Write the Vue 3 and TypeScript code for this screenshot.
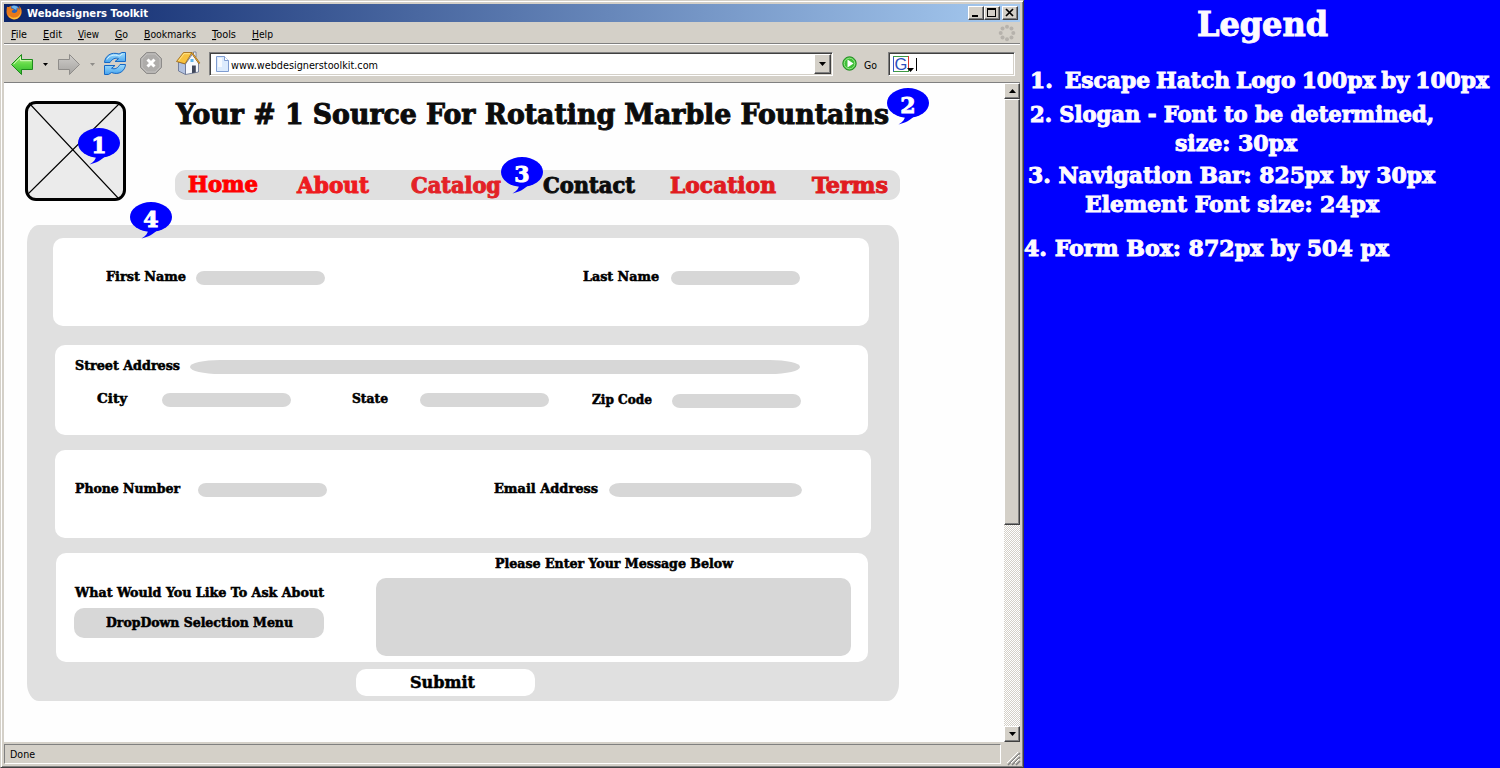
<script setup lang="ts">
import { h, type FunctionalComponent } from 'vue'

interface RunProps {
  t: string
  w: number
  size: number
  u?: boolean
}

// Single line of text fitted to a fixed width; the box spans cap height to baseline.
const TextRun: FunctionalComponent<RunProps> = (p) => {
  const cap = Math.round(p.size * 0.729)
  const content = p.u
    ? [h('tspan', { 'text-decoration': 'underline' }, p.t[0]), p.t.slice(1)]
    : p.t
  return h('svg', { class: 'run', width: p.w, height: cap }, [
    h(
      'text',
      {
        x: 0,
        y: cap,
        'font-size': p.size,
        textLength: p.w,
        lengthAdjust: 'spacingAndGlyphs',
        fill: 'currentColor',
        'xml:space': 'preserve',
      },
      content,
    ),
  ])
}
TextRun.props = { t: String, w: Number, size: Number, u: Boolean } as any

const menu = [
  { t: 'File', w: 16 },
  { t: 'Edit', w: 19 },
  { t: 'View', w: 21 },
  { t: 'Go', w: 13 },
  { t: 'Bookmarks', w: 52 },
  { t: 'Tools', w: 24 },
  { t: 'Help', w: 21 },
]

const nav = [
  { t: 'Home', w: 70, c: 'home' },
  { t: 'About', w: 72, c: 'about' },
  { t: 'Catalog', w: 90, c: 'catalog' },
  { t: 'Contact', w: 92, c: 'contact' },
  { t: 'Location', w: 106, c: 'location' },
  { t: 'Terms', w: 76, c: 'terms' },
]

const callouts = [1, 2, 3, 4]

const legend = [
  { t: '1.\u00a0 Escape Hatch Logo 100px by 100px', w: 459, c: 'l1' },
  { t: '2. Slogan - Font to be determined,', w: 404, c: 'l2' },
  { t: 'size: 30px', w: 122, c: 'l3' },
  { t: '3. Navigation Bar: 825px by 30px', w: 407, c: 'l4' },
  { t: 'Element Font size: 24px', w: 294, c: 'l5' },
  { t: '4. Form Box: 872px by 504 px', w: 365, c: 'l6' },
]

const dots = Array.from({ length: 8 }, (_, i) => ({
  x: 8 + 6.3 * Math.cos((i * Math.PI) / 4),
  y: 8 + 6.3 * Math.sin((i * Math.PI) / 4),
}))
</script>

<template>
  <div class="screen">
    <div class="window">
      <div class="titlebar">
        <svg class="fox" width="16" height="16" viewBox="0 0 16 16">
          <circle cx="8.3" cy="7.6" r="6.4" fill="#2b62b8" />
          <path d="M5 3C7 1 11 1.500 12.500 4C11 3.500 10 4.500 10.500 6C8 5 7 4 5 3Z" fill="#6fb5ea" />
          <path d="M1 2.500C1.500 3 2 3.200 2.800 3C3.500 2.300 4.600 2 5.500 2.300C4.800 3 4.800 3.800 5.300 4.500L7.800 5C7.500 6 6.500 6.400 5.800 6.800C5.600 8.500 7.400 9.600 9.400 8.800C11.500 8 12 5.500 11 3.500C12.500 4 13 5 13.300 6C13.800 4.800 13.600 3 12.600 1.800C15 3.200 16 6 15.700 8.600C15.200 12.800 12 15.500 8.300 15.500C3.800 15.500 .5 12 .5 7.800C.5 5.800 .8 4 1 2.500Z" fill="#e8791a" />
          <path d="M13.800 4C15.600 8 14 12.500 9.500 13.500C6 14.200 3 12.500 2 10C3 14 6 15.200 8.500 15.200C13.500 15 16.500 9.500 13.800 4Z" fill="#fcc23c" />
        </svg>
        <TextRun class="ui bold" t="Webdesigners Toolkit" :w="121" :size="11" />
        <div class="winbtns">
          <div class="btn"><svg width="12" height="10"><path d="M2 7h6v2H2z" /></svg></div>
          <div class="btn"><svg width="12" height="10"><path d="M1 0h9v9H1zM2 2v6h7V2z" fill-rule="evenodd" /></svg></div>
          <div class="btn close"><svg width="12" height="10"><path d="M2 1L9 8M9 1L2 8" stroke="#000" stroke-width="1.700" /></svg></div>
        </div>
      </div>

      <div class="menubar">
        <TextRun v-for="m in menu" :key="m.t" class="ui item" :t="m.t" :w="m.w" :size="11" u />
        <svg class="throbber" width="16" height="16">
          <circle v-for="(d, i) in dots" :key="i" :cx="d.x" :cy="d.y" r="2" fill="#b6b2ac" />
        </svg>
      </div>

      <div class="toolbar">
        <svg class="tools" width="205" height="37" viewBox="0 0 205 37">
          <defs>
            <linearGradient id="gr" x1="0" y1="0" x2="0" y2="1"><stop offset="0" stop-color="#b6f28c" /><stop offset=".5" stop-color="#5fd845" /><stop offset="1" stop-color="#2eb62c" /></linearGradient>
            <linearGradient id="gy" x1="0" y1="0" x2="0" y2="1"><stop offset="0" stop-color="#cfcdca" /><stop offset="1" stop-color="#a5a3a0" /></linearGradient>
            <linearGradient id="bl" x1="0" y1="0" x2="0" y2="1"><stop offset="0" stop-color="#a2ddfb" /><stop offset="1" stop-color="#44a2ee" /></linearGradient>
          </defs>
          <path d="M7.500 19.500L17.500 9.500V14.500H28.500V24.500H17.500V29.500Z" fill="url(#gr)" stroke="#1d8a1c" stroke-linejoin="round" />
          <path d="M9.500 19.300L16.500 12.200V15.700H27.500" fill="none" stroke="#d8fbbf" />
          <path d="M39 18h5l-2.500 3z" fill="#000" />
          <path d="M75.500 19.500L65.500 9.500V14.500H54.500V24.500H65.500V29.500Z" fill="url(#gy)" stroke="#8f8d8a" stroke-linejoin="round" />
          <path d="M86 18h5l-2.500 3z" fill="#8e8c88" />
          <path d="M100.500 17.500C101 11 107 6.500 115 9L118 7.500H121.500V16.500H111L114.500 13.700C111.500 12.300 108 14 106 17.500Z" fill="url(#bl)" stroke="#1668c4" stroke-linejoin="round" />
          <path d="M121.500 19.500C121 26 115 30.500 107.500 27.500L104.500 29.500H100.500V20.500H111L107.500 23.300C111 24.700 114 23 116 19.500Z" fill="url(#bl)" stroke="#1668c4" stroke-linejoin="round" />
          <path d="M103 14.500C105 10.500 110 9 115.300 11L118.500 9" fill="none" stroke="#d5f2ff" />
          <path d="M142.500 7.500H151.500L157.500 13.500V22.500L151.500 28.500H142.500L136.500 22.500V13.500Z" fill="#aeacaa" stroke="#8e8c8a" />
          <path d="M143 9H151L156 14V22L151 27H143L138 22V14Z" fill="none" stroke="#c2c0be" />
          <path d="M143.500 14.500L150.500 21.500M150.500 14.500L143.500 21.500" stroke="#fff" stroke-width="3" />
          <path d="M174.500 17L181.500 19V29.500L174.500 26Z" fill="#b3c2e0" stroke="#5f6c8e" stroke-width=".8" />
          <path d="M181.500 19L188.500 9L194.500 18V27L181.500 29.500Z" fill="#f6f8fc" stroke="#5f6c8e" stroke-width=".8" />
          <path d="M188 20.500h3.800v7l-3.800.8z" fill="#40475b" />
          <path d="M186.500 14h3v3h-3z" fill="#5bb5ec" />
          <path d="M189.500 9V7h2.500v5" fill="#f2f2f5" stroke="#69758c" stroke-width=".8" />
          <path d="M172.500 16.500L179.500 7.500H188L181 18.800Z" fill="#f7c23f" stroke="#9a6412" stroke-width=".8" stroke-linejoin="round" />
          <path d="M174.500 16L180 8.700H186" fill="none" stroke="#ffe48a" />
          <path d="M188 8L195.500 18.500" fill="none" stroke="#9a6412" stroke-width="1.800" />
          <path d="M188 8L195.500 18.500" fill="none" stroke="#e3a93a" stroke-width=".9" />
        </svg>
        <div class="field url">
          <svg width="13" height="16"><path d="M.5 .5H8.500L12.500 4.500V15.500H.5Z" fill="#dcebfd" stroke="#7f9cd0" /><path d="M8.500 .5V4.500H12.500" fill="#fff" stroke="#7f9cd0" /><path d="M2 2h4v9H2z" fill="#f6faff" /></svg>
          <TextRun class="ui" t="www.webdesignerstoolkit.com" :w="147" :size="11" />
          <div class="btn drop"><svg width="7" height="4"><path d="M0 0H7L3.500 4Z" /></svg></div>
        </div>
        <svg class="go" width="15" height="15"><circle cx="7.500" cy="7.500" r="6.700" fill="#3fbf38" stroke="#228c22" /><circle cx="7.500" cy="7.500" r="5.300" fill="none" stroke="#9be78b" /><path d="M5.500 3.500L11.500 7.500L5.500 11.500Z" fill="#fff" /></svg>
        <TextRun class="ui golabel" t="Go" :w="13" :size="11" />
        <div class="field search">
          <svg width="26" height="18">
            <rect x=".5" y=".5" width="15" height="15" fill="#fff" stroke="#3f9a45" />
            <path d="M.5 1V15.500" stroke="#3657c4" />
            <path d="M15.500 0V12" stroke="#d83a30" />
            <text x="1.500" y="13.800" font-size="16.500" fill="#2a50bd" class="gee">G</text>
            <path d="M14 12H21L17.500 16Z" />
            <path d="M23.500 2V15" stroke="#000" />
          </svg>
        </div>
      </div>

      <div class="viewport">
        <div class="page">
          <div class="header">
            <svg class="logo" width="101" height="100">
              <rect x="1.500" y="1.500" width="98" height="97" rx="9.500" fill="#ebebeb" />
              <path d="M4 2L94 98M95 2L2 94" stroke="#000" stroke-width="1.100" />
              <rect x="1.500" y="1.500" width="98" height="97" rx="9.500" fill="none" stroke="#000" stroke-width="3" />
            </svg>
            <div class="headcol">
              <TextRun class="slogan" t="Your # 1 Source For Rotating Marble Fountains" :w="713" :size="27.5" />
              <div class="nav">
                <TextRun v-for="n in nav" :key="n.t" :class="n.c" :t="n.t" :w="n.w" :size="22" />
              </div>
            </div>
          </div>

          <div class="form">
            <div class="card names">
              <TextRun class="first" t="First Name" :w="80" :size="13" />
              <div class="input i10"></div>
              <TextRun class="last" t="Last Name" :w="76" :size="13" />
              <div class="input i12"></div>
            </div>
            <div class="card address">
              <div class="row">
                <TextRun class="street" t="Street Address" :w="105" :size="13" />
                <div class="input long"></div>
              </div>
              <div class="row second">
                <TextRun class="city" t="City" :w="30" :size="13" />
                <div class="input i35"></div>
                <TextRun class="state" t="State" :w="36" :size="13" />
                <div class="input i32"></div>
                <TextRun class="zip" t="Zip Code" :w="60" :size="13" />
                <div class="input i20"></div>
              </div>
            </div>
            <div class="card contactinfo">
              <TextRun class="street" t="Phone Number" :w="105" :size="13" />
              <div class="input i18"></div>
              <TextRun class="email" t="Email Address" :w="104" :size="13" />
              <div class="input mail"></div>
            </div>
            <div class="card message">
              <div class="ask">
                <TextRun class="q" t="What Would You Like To Ask About" :w="249" :size="13" />
                <div class="dropdown"><TextRun t="DropDown Selection Menu" :w="187" :size="13" /></div>
              </div>
              <div class="msg">
                <TextRun class="q" t="Please Enter Your Message Below" :w="238" :size="13" />
                <div class="textarea"></div>
              </div>
            </div>
            <div class="submit"><TextRun t="Submit" :w="65" :size="16.5" /></div>
          </div>

          <svg v-for="n in callouts" :key="n" class="callout" :class="'c' + n" width="42" height="37">
            <path d="M18 28C18 31 16 34 11.500 36.500C18 35 24 32 27 28Z" fill="#00f" />
            <ellipse cx="21" cy="15" rx="21" ry="15" fill="#00f" />
            <text x="21" y="25" font-size="22" text-anchor="middle" fill="#fff">{{ n }}</text>
          </svg>
        </div>
        <div class="scrollbar">
          <div class="btn sb"><svg width="7" height="4"><path d="M3.500 0L7 4H0Z" /></svg></div>
          <div class="btn thumb"></div>
          <div class="btn sb bottom"><svg width="7" height="4"><path d="M0 0H7L3.500 4Z" /></svg></div>
        </div>
      </div>

      <div class="statusbar">
        <div class="status"><TextRun class="ui" t="Done" :w="25" :size="11" /></div>
        <svg class="grip" width="13" height="13">
          <path d="M0 12L12 0M4 12L12 4M8 12L12 8" stroke="#808080" stroke-width="1.500" transform="translate(1 1)" />
          <path d="M0 11L11 0M4 11L12 3M8 11L12 7" stroke="#fff" />
        </svg>
      </div>
    </div>

    <div class="legend">
      <TextRun class="heading" t="Legend" :w="131" :size="33" />
      <TextRun v-for="l in legend" :key="l.c" :class="l.c" :t="l.t" :w="l.w" :size="22.5" />
    </div>
  </div>
</template>

<style>
body {
  margin: 0;
  overflow: hidden;
}
</style>

<style scoped>
.screen {
  display: flex;
  width: 1500px;
  height: 768px;
  overflow: hidden;
  background: #00f;
  font-family: 'DejaVu Serif Condensed', 'DejaVu Serif', serif;
  font-stretch: condensed;
  font-weight: bold;
  color: #000;
}
svg {
  display: block;
  flex: none;
  overflow: visible;
}
.run {
  stroke: currentColor;
  stroke-width: 0.5px;
}
.slogan,
.nav .run,
.legend .run {
  stroke-width: 0.9px;
}
.run.ui {
  stroke: none;
}
.ui {
  font-family: 'DejaVu Sans Condensed', 'DejaVu Sans', sans-serif;
  font-weight: normal;
}
.ui.bold {
  font-weight: bold;
}
.window {
  box-sizing: border-box;
  display: flex;
  flex-direction: column;
  flex: none;
  width: 1024px;
  height: 768px;
  padding: 2px;
  border: 1px solid;
  border-color: #d4d0c8 #404040 #404040 #d4d0c8;
  background: #d4d0c8;
  box-shadow: inset 1px 1px #fff, inset -1px -1px #808080;
}
.titlebar {
  box-sizing: border-box;
  display: flex;
  height: 18px;
  margin: 1px 1px 0;
  padding-left: 2px;
  background: linear-gradient(90deg, #0a246a, #a6caf0);
  color: #fff;
}
.titlebar .fox {
  margin: 0 5px 0 0;
}
.titlebar .bold {
  margin-top: 5px;
}
.winbtns {
  display: flex;
  margin: 2px 2px 0 auto;
}
.btn {
  box-sizing: border-box;
  display: flex;
  justify-content: center;
  align-items: center;
  flex: none;
  width: 16px;
  height: 14px;
  border: 1px solid;
  border-color: #fff #404040 #404040 #fff;
  background: #d4d0c8;
  box-shadow: inset -1px -1px #808080;
}
.close {
  margin-left: 2px;
}
.menubar {
  display: flex;
  height: 21px;
  margin: 0 1px;
  padding-left: 7px;
  border-bottom: 1px solid #808080;
}
.menubar .item {
  margin: 8px 16px 0 0;
}
.throbber {
  margin: 3px 5px 0 auto;
}
.toolbar {
  box-sizing: border-box;
  display: flex;
  height: 39px;
  margin: 0 1px;
  border-top: 1px solid #fff;
  border-bottom: 1px solid #808080;
}
.field {
  box-sizing: border-box;
  display: flex;
  flex: none;
  height: 24px;
  margin-top: 7px;
  border: 1px solid;
  border-color: #808080 #fff #fff #808080;
  background: #fff;
  box-shadow: inset 1px 1px #404040, inset -1px -1px #d4d0c8;
}
.url {
  width: 624px;
  padding: 3px 1px 0 6px;
}
.url .ui {
  margin: 5px 0 0 2px;
}
.drop {
  width: 17px;
  height: 20px;
  margin: -2px 0 0 auto;
}
.go {
  margin: 11px 0 0 9px;
}
.golabel {
  margin: 16px 0 0 7px;
}
.search {
  width: 127px;
  margin-left: 11px;
  padding: 3px 0 0 4px;
}
.gee {
  font-family: 'Liberation Sans', sans-serif;
  font-weight: normal;
}
.viewport {
  display: flex;
  height: 659px;
  margin: 0 1px;
}
.page {
  position: relative;
  width: 1000px;
  background: #fefefe;
}
.header {
  display: flex;
  padding: 18px 0 0 21px;
}
.headcol {
  display: flex;
  flex-direction: column;
  margin-left: 49px;
}
.slogan {
  margin: 3px 0 0 1px;
  color: #0c0c0c;
}
.nav {
  display: flex;
  width: 725px;
  height: 30px;
  margin: 46px 0 -1px;
  border-radius: 11px;
  background: #e0e0e0;
}
.nav > * {
  margin-top: 7px;
}
.nav .home {
  margin: 6px 0 0 13px;
  color: #f00;
}
.nav .about {
  margin-left: 39px;
  color: #ee1b20;
}
.nav .catalog {
  margin-left: 42px;
  color: #e32227;
}
.nav .contact {
  margin-left: 42px;
  color: #0c0c0c;
}
.nav .location {
  margin-left: 35px;
  color: #e01b20;
}
.nav .terms {
  margin-left: 36px;
  color: #e01b20;
}
.form {
  box-sizing: border-box;
  display: flex;
  flex-direction: column;
  width: 872px;
  height: 476px;
  margin: 24px 0 0 23px;
  padding-top: 13px;
  border-radius: 12px / 18px;
  background: #e0e0e0;
}
.card {
  box-sizing: border-box;
  display: flex;
  flex: none;
  border-radius: 10px;
  background: #fff;
}
.input {
  flex: none;
  width: 129px;
  height: 14px;
  border-radius: 8px / 7px;
  background: #d7d7d7;
}
.names {
  width: 816px;
  height: 88px;
  margin-left: 26px;
  padding-top: 33px;
}
.first {
  margin: 1px 0 0 53px;
}
.last {
  margin: 1px 0 0 258px;
}
.i10 {
  margin-left: 10px;
}
.i12 {
  margin-left: 12px;
}
.i18 {
  margin-left: 18px;
}
.i20 {
  margin: 1px 0 0 20px;
}
.i32 {
  margin-left: 32px;
}
.i35 {
  margin-left: 35px;
}
.address {
  flex-direction: column;
  width: 813px;
  height: 90px;
  margin: 19px 0 0 28px;
  padding-top: 15px;
}
.row {
  display: flex;
}
.second {
  margin-top: 19px;
}
.street {
  margin: 1px 0 0 20px;
}
.long {
  width: 610px;
  margin-left: 10px;
  border-radius: 30px / 7px;
}
.city {
  margin: 1px 0 0 42px;
}
.state {
  margin: 1px 0 0 61px;
}
.zip {
  margin: 2px 0 0 43px;
}
.contactinfo {
  width: 816px;
  height: 88px;
  margin: 15px 0 0 28px;
  padding-top: 33px;
}
.email {
  margin: 1px 0 0 167px;
}
.mail {
  width: 193px;
  margin-left: 11px;
  border-radius: 11px / 7px;
}
.message {
  width: 812px;
  height: 109px;
  margin: 15px 0 0 29px;
}
.ask {
  width: 268px;
}
.ask .q {
  margin: 35px 0 0 19px;
}
.dropdown {
  box-sizing: border-box;
  width: 250px;
  height: 30px;
  margin: 11px 0 0 18px;
  padding: 10px 0 0 32px;
  border-radius: 10px;
  background: #d7d7d7;
}
.msg {
  margin-left: 52px;
}
.msg .q {
  margin: 6px 0 0 119px;
}
.textarea {
  width: 475px;
  height: 78px;
  margin-top: 10px;
  border-radius: 10px;
  background: #d7d7d7;
}
.submit {
  box-sizing: border-box;
  width: 179px;
  height: 27px;
  margin: 7px 0 0 329px;
  padding: 7px 0 0 54px;
  border-radius: 10px;
  background: #fff;
}
.callout {
  position: absolute;
}
.callout text {
  font-family: 'DejaVu Serif', serif;
  font-stretch: normal;
  stroke: #fff;
  stroke-width: 0.9px;
}
.c1 {
  left: 74px;
  top: 45px;
}
.c2 {
  left: 883px;
  top: 5px;
}
.c3 {
  left: 497px;
  top: 74px;
}
.c4 {
  left: 126px;
  top: 119px;
}
.scrollbar {
  display: flex;
  flex-direction: column;
  width: 16px;
  background: repeating-conic-gradient(#fff 0 25%, #d4d0c8 0 50%) 0 0 / 2px 2px;
}
.sb {
  height: 16px;
}
.thumb {
  height: 426px;
}
.bottom {
  margin-top: auto;
}
.statusbar {
  display: flex;
  margin: 2px 1px 0;
}
.status {
  box-sizing: border-box;
  width: 997px;
  height: 20px;
  padding: 5px 0 0 5px;
  border: 1px solid;
  border-color: #808080 #fff #fff #808080;
}
.grip {
  margin: 8px 0 0 6px;
}
.legend {
  display: flex;
  flex: none;
  flex-direction: column;
  align-items: flex-start;
  width: 476px;
  color: #fdfaff;
}
.heading {
  margin: 12px 0 0 173px;
}
.l1 {
  margin: 36px 0 0 6px;
  word-spacing: -1.5px;
}
.l2 {
  margin: 18px 0 0 6px;
}
.l3 {
  margin: 13px 0 0 151px;
}
.l4 {
  margin: 16px 0 0 4px;
}
.l5 {
  margin: 13px 0 0 61px;
}
.l6 {
  margin: 28px 0 0;
}
</style>
